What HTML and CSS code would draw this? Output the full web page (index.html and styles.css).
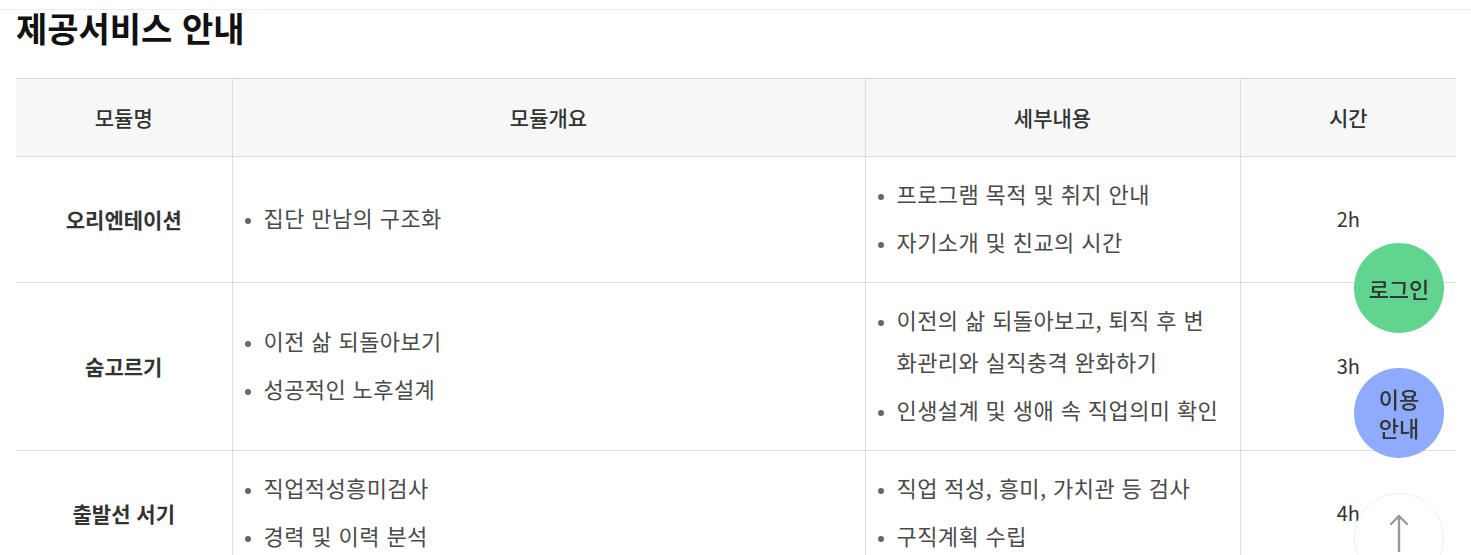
FILE: index.html
```html
<!DOCTYPE html>
<html lang="ko">
<head>
<meta charset="utf-8">
<title>제공서비스 안내</title>
<link rel="stylesheet" href="styles.css">
</head>
<body>
<div class="topbar"></div>
<main class="content">
  <h2 class="title">제공서비스 안내</h2>
  <table class="svc">
    <colgroup>
      <col class="c1"><col class="c2"><col class="c3"><col class="c4">
    </colgroup>
    <thead>
      <tr><th>모듈명</th><th>모듈개요</th><th>세부내용</th><th>시간</th></tr>
    </thead>
    <tbody>
      <tr>
        <td class="name">오리엔테이션</td>
        <td><ul><li>집단 만남의 구조화</li></ul></td>
        <td><ul><li>프로그램 목적 및 취지 안내</li><li>자기소개 및 친교의 시간</li></ul></td>
        <td class="time">2h</td>
      </tr>
      <tr>
        <td class="name">숨고르기</td>
        <td><ul><li>이전 삶 되돌아보기</li><li>성공적인 노후설계</li></ul></td>
        <td><ul><li>이전의 삶 되돌아보고, 퇴직 후 변화관리와 실직충격 완화하기</li><li>인생설계 및 생애 속 직업의미 확인</li></ul></td>
        <td class="time">3h</td>
      </tr>
      <tr>
        <td class="name">출발선 서기</td>
        <td><ul><li>직업적성흥미검사</li><li>경력 및 이력 분석</li></ul></td>
        <td><ul><li>직업 적성, 흥미, 가치관 등 검사</li><li>구직계획 수립</li></ul></td>
        <td class="time">4h</td>
      </tr>
    </tbody>
  </table>
</main>
<nav class="floating">
  <a class="fbtn login" href="#">로그인</a>
  <a class="fbtn guide" href="#"><span class="ln">이용</span><span class="ln">안내</span></a>
  <a class="fbtn top" href="#" aria-label="맨 위로">
    <svg width="24" height="40" viewBox="0 0 24 40" aria-hidden="true">
      <path d="M12 4 V40 M4 12 L12 4 L20 12" fill="none" stroke="#999" stroke-width="2.4" stroke-linecap="round" stroke-linejoin="round"/>
    </svg>
  </a>
</nav>
</body>
</html>
```

FILE: styles.css
```css
html, body {
  margin: 0;
  padding: 0;
  background: #fff;
}
body {
  font-family: "Noto Sans CJK KR", "Noto Sans", sans-serif;
  color: #444;
  overflow: hidden;
}
.topbar {
  height: 9px;
  border-bottom: 1px solid #ececec;
}
.content {
  padding: 0 15px 0 16px;
}
.title {
  margin: 0;
  font-size: 34px;
  font-weight: 700;
  line-height: 36px;
  color: #111;
  height: 68px;
}
.svc {
  width: 1440px;
  border-collapse: collapse;
  table-layout: fixed;
  border-top: 1px solid #dcdcdc;
}
.c1 { width: 216px; }
.c2 { width: 633px; }
.c3 { width: 375px; }
.c4 { width: 216px; }
.svc th {
  background: #f7f7f7;
  height: 76px;
  padding: 0 0 1px;
  font-size: 21px;
  font-weight: 500;
  color: #333;
  border-left: 1px solid #dcdcdc;
  border-bottom: 1px solid #dcdcdc;
}
.svc th:first-child, .svc td:first-child { border-left: none; }
.svc td {
  border-left: 1px solid #dcdcdc;
  border-bottom: 1px solid #dcdcdc;
  padding: 15px 20px 20px 12px;
  vertical-align: middle;
  font-size: 22px;
  color: #4a4a4a;
}
.svc td.name {
  text-align: center;
  font-size: 21px;
  font-weight: 700;
  color: #333;
  padding: 0 0 2px;
}
.svc td.time {
  text-align: center;
  font-size: 20px;
  color: #333;
  padding: 0 0 2px;
}
.svc ul {
  margin: 0;
  padding: 0 0 0 19px;
  display: flex;
  flex-direction: column;
  gap: 6px;
}
.svc li {
  line-height: 42px;
  letter-spacing: 0.4px;
}
.svc li::marker { color: #666; font-size: 16px; }
.floating {
  position: fixed;
  top: 243px;
  right: 27px;
  display: flex;
  flex-direction: column;
  gap: 35px;
}
.fbtn {
  width: 90px;
  height: 90px;
  border-radius: 50%;
  display: flex;
  flex-direction: column;
  align-items: center;
  justify-content: center;
  text-align: center;
  text-decoration: none;
  color: #333;
  font-size: 22px;
  font-weight: 500;
  line-height: 28px;
  box-sizing: border-box;
}
.fbtn .ln { display: block; line-height: 29px; }
.login { background: #61d490; }
.guide { background: #8eabfd; }
.top {
  background: #fff;
  border: 1px solid #eee;
  justify-content: flex-start;
  padding-top: 18px;
}
```
